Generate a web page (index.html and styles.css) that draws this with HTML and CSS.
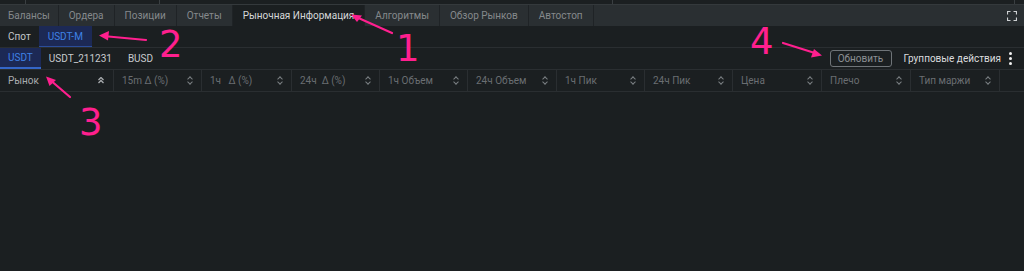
FILE: index.html
```html
<!DOCTYPE html>
<html lang="ru">
<head>
  <meta charset="UTF-8">
  <title>Рыночная Информация</title>
  <link rel="stylesheet" href="styles.css">
</head>
<body>
  <div class="page">
    <!-- полоса панелей сверху -->
    <div class="top-strip">
      <div class="strip-cell" style="width: 26px"></div>
      <div class="strip-cell" style="width: 134px"></div>
      <div class="strip-cell" style="width: 453px"></div>
      <div class="strip-cell" style="width: 402px"></div>
    </div>

    <!-- вкладки -->
    <div class="tab-bar">
      <div class="tab first">Балансы</div>
      <div class="tab">Ордера</div>
      <div class="tab">Позиции</div>
      <div class="tab">Отчеты</div>
      <div class="tab active">Рыночная Информация</div>
      <div class="tab">Алгоритмы</div>
      <div class="tab">Обзор Рынков</div>
      <div class="tab">Автостоп</div>
      <div class="tab-spacer"></div>
      <svg class="fullscreen" width="10" height="10" viewBox="0 0 10 10">
        <path d="M0.5 3.5V0.5H3.5M6.5 0.5H9.5V3.5M9.5 6.5V9.5H6.5M3.5 9.5H0.5V6.5" fill="none" stroke="#cfd2d4" stroke-width="1.2"/>
      </svg>
    </div>

    <!-- тип рынка -->
    <div class="market-row">
      <div class="pill">Спот</div>
      <div class="pill selected">USDT-M</div>
    </div>

    <!-- котировочные валюты -->
    <div class="quote-row">
      <div class="quote selected">USDT</div>
      <div class="quote">USDT_211231</div>
      <div class="quote">BUSD</div>
      <div class="row-spacer"></div>
      <button class="refresh-btn">Обновить</button>
      <div class="group-actions">Групповые действия</div>
      <div class="kebab"><span></span><span></span><span></span></div>
    </div>

    <!-- шапка таблицы -->
    <div class="table-head">
      <div class="col" style="width: 114px"><span class="col-name light">Рынок</span>
        <svg class="sort-up" width="6" height="7" viewBox="0 0 6 7"><path d="M0.5 3L3 0.5L5.5 3M0.5 6L3 3.5L5.5 6" fill="none" stroke="#a9acaf" stroke-width="1.3"/></svg>
      </div>
      <div class="col" style="width: 88px"><span class="col-name">15m Δ (%)</span><span class="sort"></span></div>
      <div class="col" style="width: 90px"><span class="col-name">1ч &nbsp; Δ (%)</span><span class="sort"></span></div>
      <div class="col" style="width: 88px"><span class="col-name">24ч &nbsp;Δ (%)</span><span class="sort"></span></div>
      <div class="col" style="width: 88px"><span class="col-name">1ч Объем</span><span class="sort"></span></div>
      <div class="col" style="width: 89px"><span class="col-name">24ч Объем</span><span class="sort"></span></div>
      <div class="col" style="width: 88px"><span class="col-name">1ч Пик</span><span class="sort"></span></div>
      <div class="col" style="width: 88px"><span class="col-name">24ч Пик</span><span class="sort"></span></div>
      <div class="col" style="width: 89px"><span class="col-name">Цена</span><span class="sort"></span></div>
      <div class="col" style="width: 89px"><span class="col-name">Плечо</span><span class="sort"></span></div>
      <div class="col" style="width: 89px"><span class="col-name">Тип маржи</span><span class="sort"></span></div>
    </div>

    <div class="table-body"></div>

    <!-- пометки поверх скриншота -->
    <svg class="marks" width="1024" height="271" viewBox="0 0 1024 271">
      <g stroke="#ff1f8e" stroke-width="2.2" fill="none" stroke-linecap="round">
        <path d="M392 33L354 16"/>
        <path d="M146 40L103 36"/>
        <path d="M70 97L49 79"/>
        <path d="M783 43L818 54"/>
      </g>
      <g fill="#ff1f8e">
        <path d="M351 14.5L362 15.5L357 22Z"/>
        <path d="M99 35.5L109 31L108 40.5Z"/>
        <path d="M46 76.5L56 80L49.5 86Z"/>
        <path d="M822 55.5L811 57.5L814 49Z"/>
      </g>
      <g class="mark-num">
        <text x="396" y="61">1</text>
        <text x="159" y="57">2</text>
        <text x="79" y="135">3</text>
        <text x="750" y="54">4</text>
      </g>
    </svg>
  </div>
</body>
</html>
```

FILE: styles.css
```css
body {
  margin: 0;
  background-color: #1b1f21;
  font-family: "Roboto", "Liberation Sans", sans-serif;
  font-size: 10px;
  color: #c9cccf;
}
.page {
  position: relative;
  width: 1024px;
  height: 271px;
  overflow: hidden;
}
.top-strip {
  display: flex;
  height: 4px;
  border-bottom: 1px solid #34393c;
}
.strip-cell {
  border-right: 1px solid #3a3f42;
  box-sizing: border-box;
}
/* Вкладки */
.tab-bar {
  display: flex;
  align-items: stretch;
  height: 21px;
  background-color: #2a2f32;
}
.tab {
  display: flex;
  align-items: center;
  padding: 0 10px;
  color: #85898c;
  border-right: 1px solid #1f2326;
  white-space: nowrap;
}
.tab.first {
  padding: 0 8px;
}
.tab.active {
  background-color: #1b1f21;
  color: #d5d7d9;
}
.tab-spacer {
  flex: 1;
}
.fullscreen {
  align-self: center;
  margin-right: 7px;
}
/* Тип рынка */
.market-row {
  display: flex;
  height: 21px;
  border-bottom: 1px solid #2a2e31;
}
.pill {
  display: flex;
  align-items: center;
  padding: 0 8px;
  color: #c4c7ca;
}
.pill.selected {
  padding: 0 9px;
  background-color: #1c2955;
  color: #3f82e6;
  border-bottom: 1px solid #2b4d9a;
}
/* Котировочные валюты */
.quote-row {
  display: flex;
  align-items: center;
  height: 21px;
  border-bottom: 1px solid #2a2e31;
}
.quote {
  display: flex;
  align-items: center;
  height: 100%;
  padding: 0 8px;
  color: #c8cbce;
  box-sizing: border-box;
}
.quote.selected {
  background-color: #1c2955;
  color: #3f82e6;
  border-bottom: 2px solid #3466c8;
}
.row-spacer {
  flex: 1;
}
.refresh-btn {
  height: 17px;
  width: 62px;
  padding: 0;
  background: transparent;
  border: 1px solid #6f7478;
  border-radius: 3px;
  color: #8c9094;
  font-family: inherit;
  font-size: 10px;
  cursor: pointer;
}
.group-actions {
  margin-left: 12px;
  color: #dadcde;
}
.kebab {
  display: flex;
  flex-direction: column;
  gap: 2px;
  margin: 0 12px 0 8px;
}
.kebab span {
  width: 3px;
  height: 3px;
  border-radius: 50%;
  background-color: #f0f0f0;
}
/* Шапка таблицы */
.table-head {
  display: flex;
  height: 21px;
  border-bottom: 1px solid #2a2e31;
}
.col {
  display: flex;
  align-items: center;
  justify-content: space-between;
  padding: 0 8px;
  box-sizing: border-box;
  border-right: 1px solid #2a2e31;
}
.col-name {
  color: #6a6e72;
  white-space: nowrap;
}
.col-name.light {
  color: #a9acaf;
}
.sort {
  width: 5px;
  height: 9px;
  position: relative;
}
.sort::before,
.sort::after {
  content: "";
  position: absolute;
  left: 0;
  width: 3px;
  height: 3px;
  border-left: 1px solid #7c8084;
  border-top: 1px solid #7c8084;
}
.sort::before {
  top: 1px;
  transform: rotate(45deg);
}
.sort::after {
  bottom: 1px;
  transform: rotate(225deg);
}
.sort-up {
  margin-right: 1px;
}
.table-body {
  height: 180px;
}
/* Пометки */
.marks {
  position: absolute;
  left: 0;
  top: 0;
  pointer-events: none;
}
.mark-num text {
  font-family: "DejaVu Sans", sans-serif;
  font-size: 37px;
  fill: #ff1f8e;
}
```
